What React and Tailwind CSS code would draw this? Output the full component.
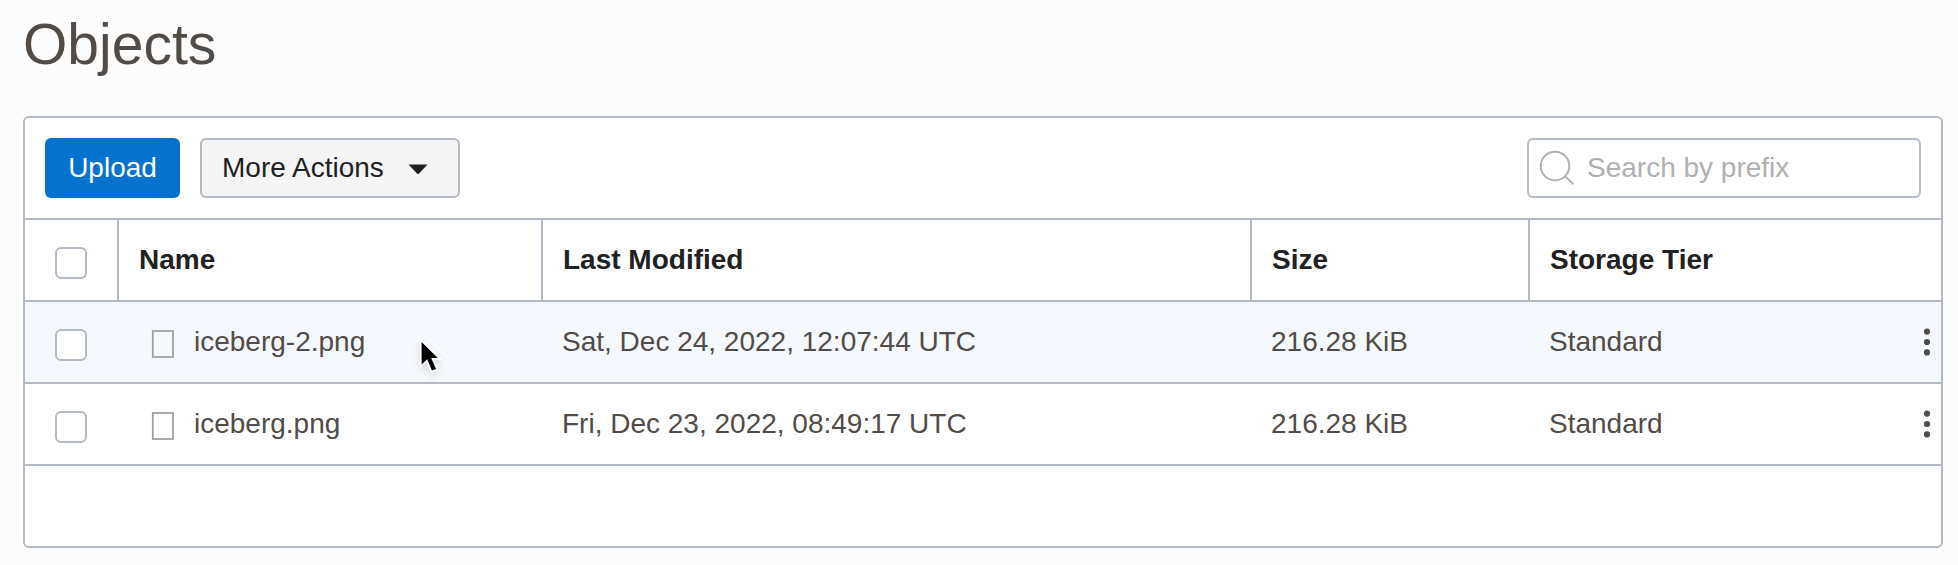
const objects = [
  { name: 'iceberg-2.png', modified: 'Sat, Dec 24, 2022, 12:07:44 UTC', size: '216.28 KiB', tier: 'Standard', active: true },
  { name: 'iceberg.png', modified: 'Fri, Dec 23, 2022, 08:49:17 UTC', size: '216.28 KiB', tier: 'Standard', active: false },
];

function Checkbox({ label }) {
  return (
    <input
      type="checkbox"
      aria-label={label}
      className="mt-1.5 block size-8 appearance-none rounded-md border-2 border-[#b3bac5] bg-white checked:bg-[#0572ce]"
    />
  );
}

function HeaderCell({ children }) {
  return (
    <th scope="col" className="border-r-2 border-b-2 border-[#b3bac5] px-5 text-left font-bold text-[#212121]">
      {children}
    </th>
  );
}

function ObjectRow({ object }) {
  const cell = 'border-b-2 border-[#b3bac5] px-[19px]';
  return (
    <tr className={object.active ? 'h-[82px] bg-[#f5f8fd]' : 'h-[82px] bg-white'}>
      <td className="border-b-2 border-[#b3bac5] pl-[30px]">
        <Checkbox label={`Select ${object.name}`} />
      </td>
      <td className={cell}>
        <div className="flex items-center gap-5 pl-3">
          <svg className="mt-1 h-7 w-6 shrink-0" viewBox="0 0 24 28" fill="none" aria-hidden="true">
            <rect x="2.8" y="1" width="20.2" height="26" stroke="#a0a0a0" strokeWidth="1.8" />
          </svg>
          <span>{object.name}</span>
        </div>
      </td>
      <td className={cell}>{object.modified}</td>
      <td className={cell}>{object.size}</td>
      <td className={cell}>{object.tier}</td>
      <td className="border-b-2 border-[#b3bac5]">
        <button type="button" aria-label={`Actions for ${object.name}`} className="ml-auto flex h-10 w-7 items-center justify-center">
          <svg className="h-7 w-2" viewBox="0 0 8 28" fill="#514c47" aria-hidden="true">
            <circle cx="4" cy="3.6" r="3.1" />
            <circle cx="4" cy="14" r="3.1" />
            <circle cx="4" cy="24.4" r="3.1" />
          </svg>
        </button>
      </td>
    </tr>
  );
}

export default function App() {
  return (
    <main className="relative min-h-screen bg-[#fcfcfc] pt-3 pr-[15px] pb-3 pl-[23px] font-['Liberation_Sans',Arial,sans-serif] text-[28px] leading-9 text-[#514c47]">
      <h1 className="text-[57px] leading-16">Objects</h1>

      <section className="mt-10 overflow-hidden rounded-md border-2 border-[#b3bac5] bg-white">
        <div className="flex items-center justify-between p-5">
          <div className="flex gap-5">
            <button type="button" className="h-15 w-[135px] rounded-md bg-[#0572ce] text-white">
              Upload
            </button>
            <button
              type="button"
              className="flex h-15 w-[260px] items-center justify-between rounded-md border-2 border-[#b3bac5] bg-[#f5f5f5] pr-[30px] pl-5 text-[#212121]"
            >
              More Actions
              <svg className="h-3 w-5" viewBox="0 0 20 12" fill="#212121" aria-hidden="true">
                <path d="M0.5 2.5h19L11 11.6a1.4 1.4 0 0 1-2 0z" />
              </svg>
            </button>
          </div>

          <label className="flex h-15 w-[394px] items-center gap-3 rounded-md border-2 border-[#b3bac5] bg-white pr-3 pl-2.5">
            <svg className="size-9 shrink-0" viewBox="0 0 36 36" fill="none" stroke="#b0b0b0" strokeWidth="2" aria-hidden="true">
              <circle cx="16" cy="16" r="14.3" />
              <path d="M26 26.2l8.4 8" />
            </svg>
            <input
              type="search"
              aria-label="Search by prefix"
              placeholder="Search by prefix"
              className="w-full min-w-0 bg-transparent outline-none placeholder:text-[#b0b0b0]"
            />
          </label>
        </div>

        <table className="w-full table-fixed border-separate border-spacing-0 border-t-2 border-[#b3bac5]">
          <colgroup>
            <col className="w-[94px]" />
            <col className="w-[424px]" />
            <col />
            <col className="w-[278px]" />
            <col className="w-[363px]" />
            <col className="w-12" />
          </colgroup>
          <thead>
            <tr className="h-[82px]">
              <th scope="col" className="border-r-2 border-b-2 border-[#b3bac5] pl-[30px]">
                <Checkbox label="Select all objects" />
              </th>
              <HeaderCell>Name</HeaderCell>
              <HeaderCell>Last Modified</HeaderCell>
              <HeaderCell>Size</HeaderCell>
              <th scope="col" className="border-b-2 border-[#b3bac5] px-5 text-left font-bold text-[#212121]">
                Storage Tier
              </th>
              <td className="border-b-2 border-[#b3bac5]" />
            </tr>
          </thead>
          <tbody>
            {objects.map((object) => (
              <ObjectRow key={object.name} object={object} />
            ))}
          </tbody>
        </table>
        <div className="h-20" />
      </section>

      <svg className="pointer-events-none absolute top-[335px] left-[415px] h-10 w-8 drop-shadow-md" viewBox="0 0 32 40" aria-hidden="true">
        <path
          d="M6.6 7V29.4L12.2 24.2L17 35.6L21 34L16.2 23H22.8Z"
          fill="#000"
          stroke="#fff"
          strokeWidth="4"
          paintOrder="stroke"
        />
      </svg>
    </main>
  );
}
